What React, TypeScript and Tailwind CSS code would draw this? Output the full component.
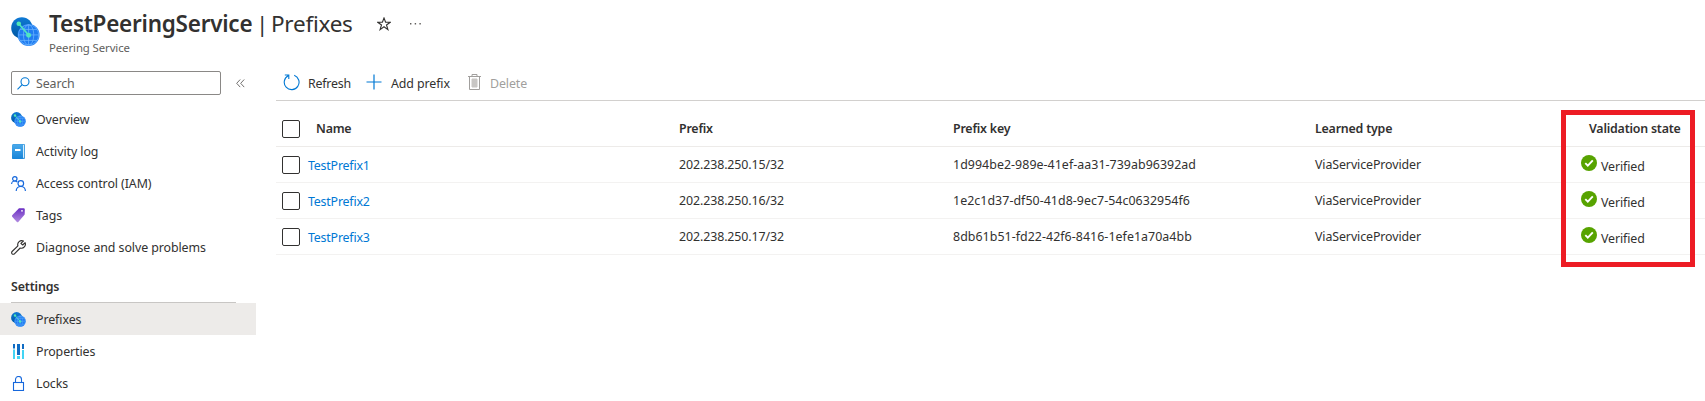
import React from "react";

const CheckBox = () => (
  <span className="block h-[18px] w-[18px] shrink-0 rounded-[2px] border border-[#323130] bg-white" />
);

const Globe = ({ size }: { size: number }) => (
  <svg width={size} height={size} viewBox="0 0 28 28" fill="none" className="shrink-0">
    <defs>
      <linearGradient id="disc" x1="0" y1="0" x2="0" y2="1">
        <stop offset="0" stopColor="#0f7ad6" />
        <stop offset="1" stopColor="#0057a0" />
      </linearGradient>
    </defs>
    <circle cx="10.5" cy="10.5" r="10.3" fill="url(#disc)" />
    <circle cx="17" cy="17.3" r="10.6" fill="#1f7cf0" />
    <g stroke="#6db6ff" strokeWidth="0.7">
      <circle cx="17" cy="17.3" r="9.8" />
      <ellipse cx="17" cy="17.3" rx="5" ry="9.8" />
      <path d="M17 7.500v19.600M7.200 17.300h19.600M9 12h16M9 22.600h16" />
    </g>
    <path d="M7.500 6.500l9.500 11" stroke="#50e6c0" strokeWidth="1.500" />
    <circle cx="7.500" cy="6.500" r="2.200" fill="#50e6b4" />
    <circle cx="17" cy="17.700" r="2.400" fill="#50e6c0" />
  </svg>
);

const LogIcon = () => (
  <svg width="15" height="15" viewBox="0 0 15 15" className="shrink-0">
    <defs>
      <linearGradient id="book" x1="0" y1="0" x2="0" y2="1">
        <stop offset="0" stopColor="#4aa9ea" />
        <stop offset="1" stopColor="#1784d8" />
      </linearGradient>
    </defs>
    <rect x="1.500" y="0" width="12.500" height="15" rx="1" fill="#3b9ade" />
    <rect x="11.800" y="0.800" width="1.300" height="13" fill="#d8eefc" />
    <rect x="1" y="0.500" width="11" height="14.500" rx="0.800" fill="url(#book)" />
    <rect x="4" y="5" width="5.500" height="2" fill="#fff" />
  </svg>
);

const PeopleIcon = () => (
  <svg width="15" height="15" viewBox="0 0 15 15" fill="none" stroke="#1668dc" strokeWidth="1.200" className="shrink-0">
    <circle cx="3.800" cy="2.800" r="2.200" />
    <path d="M0.600 8c0-1.800 1.500-3 3.200-3 1 0 1.800.3 2.500 1" />
    <circle cx="9.800" cy="7.500" r="2.800" />
    <path d="M5.200 15c0-2.700 2-4.700 4.600-4.700s4.600 2 4.600 4.700" />
  </svg>
);

const TagIcon = () => (
  <svg width="15" height="15" viewBox="0 0 15 15" className="shrink-0">
    <defs>
      <linearGradient id="tag" x1="0" y1="0" x2="0" y2="1">
        <stop offset="0" stopColor="#6b2fc3" />
        <stop offset="1" stopColor="#b18be0" />
      </linearGradient>
    </defs>
    <path d="M8 0.300L12.600 0.300q1.200 0 1.200 1.200L13.700 6.500 7.300 14q-.7.600-1.400 0L1.200 8.700q-.5-.8 0-1.500z" fill="url(#tag)" />
    <circle cx="11" cy="2.800" r="0.900" fill="#fff" />
  </svg>
);

const WrenchIcon = () => (
  <svg width="15" height="15" viewBox="0 0 15 15" fill="none" stroke="#323130" strokeWidth="1.150" strokeLinejoin="round" className="shrink-0">
    <path d="M12.400 1A4 4 0 0 0 6.900 5.800L1.100 11.500a1.600 1.600 0 0 0 2.300 2.300L9.200 8a4 4 0 0 0 4.900-5.300L11.700 5 9.900 3.300z" />
  </svg>
);

const PropertiesIcon = () => (
  <svg width="15" height="15" viewBox="0 0 15 15" className="shrink-0">
    <g fill="#0f6cc4">
      <rect x="2" y="0" width="2" height="4.500" />
      <rect x="6" y="0" width="3" height="11" />
      <rect x="11" y="0" width="2" height="5" />
    </g>
    <g fill="#42d4f4">
      <rect x="2" y="5.500" width="2" height="9.500" />
      <rect x="6" y="12" width="3" height="3" />
      <rect x="11" y="6" width="2" height="9" />
    </g>
  </svg>
);

const LockIcon = () => (
  <svg width="15" height="15" viewBox="0 0 15 15" fill="none" stroke="#1668dc" strokeWidth="1.100" className="shrink-0">
    <rect x="2.500" y="6.500" width="10" height="8" />
    <path d="M4.500 6.500V3.500a3 3 0 0 1 6 0v3" />
  </svg>
);

type Item = { label: string; icon: React.ReactNode; selected?: boolean };

const MenuItem = ({ label, icon, selected }: Item) => (
  <div className={`flex h-8 w-[256px] items-center gap-[10px] pl-[11px] ${selected ? "bg-[#edebe9]" : ""}`}>
    {icon}
    <span className="whitespace-nowrap pt-[2px] tracking-[-0.08px]">{label}</span>
  </div>
);

const menu: Item[] = [
  { label: "Overview", icon: <Globe size={15} /> },
  { label: "Activity log", icon: <LogIcon /> },
  { label: "Access control (IAM)", icon: <PeopleIcon /> },
  { label: "Tags", icon: <TagIcon /> },
  { label: "Diagnose and solve problems", icon: <WrenchIcon /> },
];

const settings: Item[] = [
  { label: "Prefixes", icon: <Globe size={15} />, selected: true },
  { label: "Properties", icon: <PropertiesIcon /> },
  { label: "Locks", icon: <LockIcon /> },
];

const rows = [
  ["TestPrefix1", "202.238.250.15/32", "1d994be2-989e-41ef-aa31-739ab96392ad"],
  ["TestPrefix2", "202.238.250.16/32", "1e2c1d37-df50-41d8-9ec7-54c0632954f6"],
  ["TestPrefix3", "202.238.250.17/32", "8db61b51-fd22-42f6-8416-1efe1a70a4bb"],
];

const Verified = () => (
  <svg width="16" height="16" viewBox="0 0 16 16" fill="none" className="shrink-0">
    <circle cx="8" cy="8" r="8" fill="#57a300" />
    <path d="M4.300 8.200l2.500 2.500 5-5.300" stroke="#fff" strokeWidth="1.900" />
  </svg>
);

const grid = "grid grid-cols-[32px_365px_274px_362px_1fr] items-center border-b pl-[6px]";

export default function App() {
  return (
    <div className="h-[401px] w-[1705px] overflow-hidden bg-white font-['Noto_Sans','Open_Sans',sans-serif] text-[12.4px] leading-4 text-[#323130]">
      <header className="flex h-[71px] pl-[11px] pt-[8px]">
        <div className="mt-[9px]">
          <Globe size={29} />
        </div>
        <div className="ml-[9px]">
          <div className="flex h-8 items-center whitespace-nowrap text-[22.5px] leading-8">
            <h1 className="w-[206px] font-semibold tracking-[-0.25px]">TestPeeringService</h1>
            <span className="w-[16px] pl-px">|</span>
            <span className="w-[83px] tracking-[-0.25px]">Prefixes</span>
          </div>
          <p className="text-[11.4px] leading-4 tracking-[-0.1px] text-[#605e5c]">Peering Service</p>
        </div>
        <svg width="14" height="14" viewBox="0 0 14 14" fill="none" stroke="#323130" strokeWidth="1.100" className="ml-[23px] mt-[9px]">
          <path d="M7 1l1.600 4.300h4.600L9.500 8l1.400 4.600L7 9.800l-3.900 2.800L4.500 8 .8 5.300h4.600z" />
        </svg>
        <svg width="11" height="2" viewBox="0 0 11 2" fill="#605e5c" className="ml-[19px] mt-[15px]">
          <path d="M0 0h1.400v1.400H0zM4.700 0h1.400v1.400H4.700zM9.400 0h1.400v1.400H9.400z" />
        </svg>
      </header>
      <div className="flex">
        <aside className="w-[276px] shrink-0">
          <div className="flex h-8 items-start pl-[11px]">
            <div className="flex h-6 w-[210px] items-center rounded-[2px] border border-[#8a8886] pl-[5px] text-[#605e5c]">
              <svg width="13" height="13" viewBox="0 0 13 13" fill="none" stroke="#0078d4" strokeWidth="1.100">
                <circle cx="8" cy="4.800" r="4" />
                <path d="M5.200 7.700L0.500 12.400" />
              </svg>
              <span className="ml-[6px] pt-[2px] tracking-[-0.1px]">Search</span>
            </div>
            <svg width="9" height="9" viewBox="0 0 9 9" fill="none" stroke="#605e5c" strokeWidth="0.900" className="ml-[15px] mt-[8px]">
              <path d="M4.200 0.500L0.700 4.300l3.500 3.800M8.200 0.500L4.700 4.300l3.500 3.800" />
            </svg>
          </div>
          <nav>
            {menu.map((m) => (
              <MenuItem key={m.label} {...m} />
            ))}
            <div className="ml-[11px] flex h-[40px] w-[225px] items-center border-b border-[#c8c6c4] pt-[8px] font-semibold tracking-[-0.15px]">
              Settings
            </div>
            {settings.map((m) => (
              <MenuItem key={m.label} {...m} />
            ))}
          </nav>
        </aside>
        <main className="grow">
          <div className="flex h-[30px] items-start border-b border-[#d2d0ce] pl-[7px] pt-[3px]">
            <svg width="17" height="17" viewBox="0 0 17 17" fill="none" stroke="#0078d4" strokeWidth="1.100">
              <path d="M11.200 1.300A7.400 7.400 0 1 1 5.200 1.700M1.800 1h4v4" />
            </svg>
            <span className="ml-[8px] mt-[2px] w-[58px] tracking-[-0.2px]">Refresh</span>
            <svg width="16" height="16" viewBox="0 0 16 16" stroke="#0078d4" strokeWidth="1.200">
              <path d="M8 0.500v15M0.500 8h15" />
            </svg>
            <span className="ml-[9px] mt-[2px] w-[77px] whitespace-nowrap tracking-[-0.1px]">Add prefix</span>
            <svg width="13" height="17" viewBox="0 0 13 17" fill="none" stroke="#a19f9d">
              <path d="M0 2.500h13M4 2.500V0.500h5v2M1.500 2.500v13h10v-13" />
              <path d="M4 5h5v8H4z" fill="#c8c6c4" stroke="#c8c6c4" />
            </svg>
            <span className="ml-[9px] mt-[2px] tracking-[-0.1px] text-[#a19f9d]">Delete</span>
          </div>
          <div className="relative">
            <div className={`${grid} h-[46px] border-[#edebe9] pt-[10px] font-semibold tracking-[-0.2px]`}>
              <CheckBox />
              <span className="pl-[2px]">Name</span>
              <span>Prefix</span>
              <span>Prefix key</span>
              <span className="flex">
                <span className="w-[274px]">Learned type</span>
                <span className="whitespace-nowrap">Validation state</span>
              </span>
            </div>
            {rows.map(([name, prefix, key]) => (
              <div key={name} className={`${grid} h-9 border-[#f3f2f1] pt-px`}>
                <CheckBox />
                <a className="-ml-[6px] pt-px tracking-[-0.2px] text-[#0078d4]">{name}</a>
                <span className="tracking-[-0.1px]">{prefix}</span>
                <span className="tracking-[0.05px]">{key}</span>
                <span className="flex h-4 items-center">
                  <span className="w-[266px] tracking-[-0.1px]">ViaServiceProvider</span>
                  <span className="-mt-[4px]">
                    <Verified />
                  </span>
                  <span className="ml-1 pt-[3px] tracking-[-0.1px]">Verified</span>
                </span>
              </div>
            ))}
            <div className="absolute left-[1285px] top-[9px] h-[157px] w-[134px] border-[5px] border-[#ed1c24]" />
          </div>
        </main>
      </div>
    </div>
  );
}
